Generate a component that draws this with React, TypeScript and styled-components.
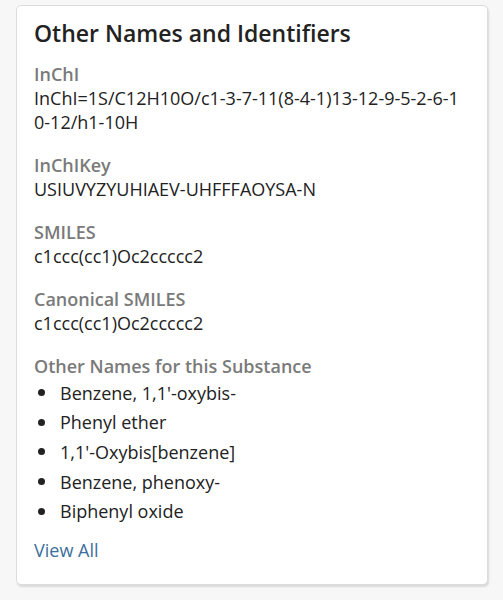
import React from 'react'
import styled, { createGlobalStyle } from 'styled-components'

const GlobalStyle = createGlobalStyle`
  body {
    margin: 0;
    background: #f7f7f7;
    font-family: 'Open Sans', 'Noto Sans', sans-serif;
  }
`

const Page = styled.div`
  padding: 5px 15px 15px 16px;
`

const Card = styled.section`
  background: #fff;
  border: 1px solid #dcdcdc;
  border-radius: 5px;
  box-shadow: 1px 2px 2px rgba(0, 0, 0, 0.12);
  padding: 12px 25px 26px 17px;
  height: 580px;
  box-sizing: border-box;
`

const Title = styled.h2`
  margin: 0 0 14px;
  font-size: 23px;
  font-weight: 600;
  color: #222;
  line-height: 30px;
`

const Field = styled.div`
  margin-bottom: 19px;
`

const Label = styled.div`
  font-size: 18px;
  font-weight: 600;
  color: #7a7a7a;
  line-height: 24px;
`

const Value = styled.div`
  font-size: 18px;
  color: #222;
  line-height: 24px;
  word-break: break-all;
`

const List = styled.ul`
  margin: 0;
  padding: 0;
  list-style: none;
`

const Item = styled.li`
  display: flex;
  align-items: center;
  font-size: 18px;
  color: #222;
  height: 29.6px;
  &::before {
    content: '';
    width: 7px;
    height: 7px;
    border-radius: 50%;
    background: #222;
    margin: 0 15px 0 4px;
  }
`

const Link = styled.a`
  display: inline-block;
  margin-top: 12px;
  font-size: 18px;
  color: #3b6f9c;
  text-decoration: none;
  line-height: 24px;
`

const fields = [
  { label: 'InChI', value: 'InChI=1S/C12H10O/c1-3-7-11(8-4-1)13-12-9-5-2-6-10-12/h1-10H' },
  { label: 'InChIKey', value: 'USIUVYZYUHIAEV-UHFFFAOYSA-N' },
  { label: 'SMILES', value: 'c1ccc(cc1)Oc2ccccc2' },
  { label: 'Canonical SMILES', value: 'c1ccc(cc1)Oc2ccccc2' },
]

const names = [
  "Benzene, 1,1'-oxybis-",
  'Phenyl ether',
  "1,1'-Oxybis[benzene]",
  'Benzene, phenoxy-',
  'Biphenyl oxide',
]

export default function App() {
  return (
    <Page>
      <GlobalStyle />
      <Card>
        <Title>Other Names and Identifiers</Title>
        {fields.map(f => (
          <Field key={f.label}>
            <Label>{f.label}</Label>
            <Value>{f.value}</Value>
          </Field>
        ))}
        <Label>Other Names for this Substance</Label>
        <List>
          {names.map(n => (
            <Item key={n}>{n}</Item>
          ))}
        </List>
        <Link href="#">View All</Link>
      </Card>
    </Page>
  )
}
